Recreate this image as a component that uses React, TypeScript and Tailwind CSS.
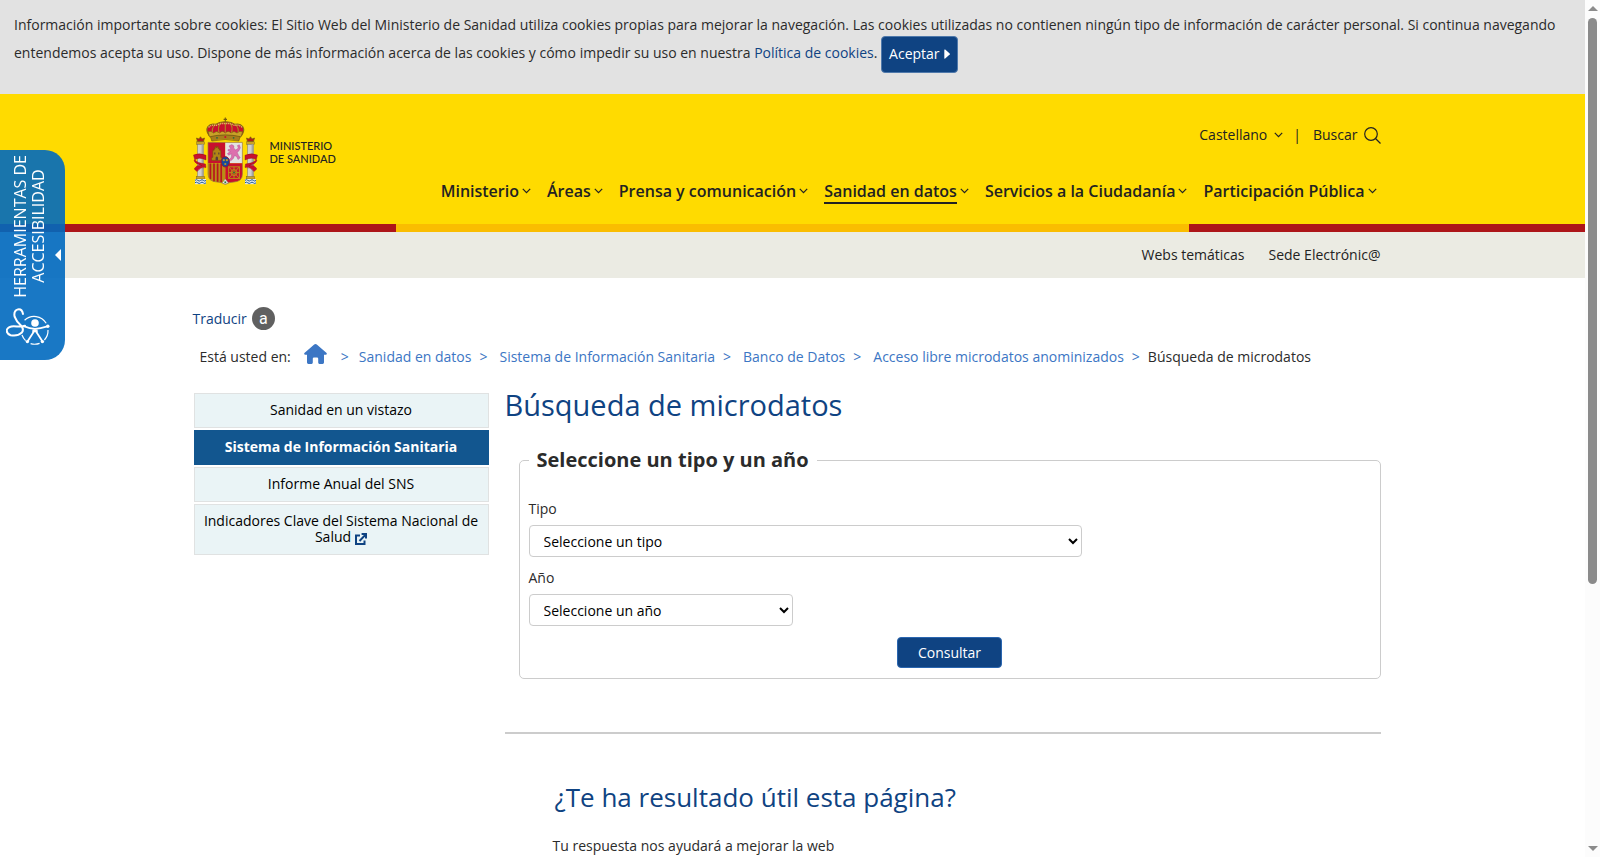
import { useState } from "react";

const navItems = [
    { label: "Ministerio", active: false },
    { label: "Áreas", active: false },
    { label: "Prensa y comunicación", active: false },
    { label: "Sanidad en datos", active: true },
    { label: "Servicios a la Ciudadanía", active: false },
    { label: "Participación Pública", active: false },
];

const breadcrumbs = [
    "Sanidad en datos",
    "Sistema de Información Sanitaria",
    "Banco de Datos",
    "Acceso libre microdatos anominizados",
];

const sideLinks = [
    { label: "Sanidad en un vistazo" },
    { label: "Sistema de Información Sanitaria", active: true },
    { label: "Informe Anual del SNS" },
    { label: "Indicadores Clave del Sistema Nacional de Salud", external: true },
];

function Chevron() {
    return (
        <svg viewBox="0 0 9 6" className="h-[6px] w-[9px]" fill="none" stroke="#222" strokeWidth="1.2" aria-hidden="true">
            <path d="M0.8 0.8 L4.5 4.6 L8.2 0.8" />
        </svg>
    );
}

function Pillar({ x }: { x: number }) {
    return (
        <g transform={`translate(${x} 0)`}>
            <path d="M1.5 24.5 L0.5 21 L3 22 L4.5 19.8 L6 22 L8.5 21 L7.5 24.5 Z" fill="#b0201c" stroke="#7a5a10" strokeWidth="0.7" />
            <rect x="0.6" y="24.8" width="7.8" height="2.6" fill="#c9a227" stroke="#6d5a1a" strokeWidth="0.4" />
            <rect x="1.5" y="27.4" width="6" height="33" fill="#cfcfcf" stroke="#77756a" strokeWidth="0.5" />
            <rect x="5.6" y="27.6" width="1.6" height="32.6" fill="#a5a5a5" />
            <rect x="0.3" y="59.4" width="8.4" height="2.6" fill="#c9a227" stroke="#6d5a1a" strokeWidth="0.4" />
            <rect x="-1" y="62" width="11" height="5.2" fill="#e6e9ea" />
            <path d="M-1 63.4 q1.4 -1.4 2.8 0 t2.8 0 t2.8 0 t2.6 0 M-1 65.8 q1.4 -1.4 2.8 0 t2.8 0 t2.8 0 t2.6 0" fill="none" stroke="#1d5a94" strokeWidth="1" />
        </g>
    );
}

function CoatOfArms() {
    return (
        <svg viewBox="0 0 65 70" className="h-[70px] w-[65px]" aria-hidden="true">
            <Pillar x={3} />
            <Pillar x={53} />
            {/* Ribbons */}
            <g fill="#c8102e" stroke="#8a1015" strokeWidth="0.4">
                <path d="M0.5 38 Q6 35.6 13 38.2 L13 43 Q6 39.6 1.8 42.8 Z" />
                <path d="M1.8 42.8 Q4 46 12.5 47 L13 50.5 Q8 49.5 4 54.5 L1.2 52 Q4 47 9 48.6 Q2 47 1 43.4 Z" />
                <path d="M64.5 38 Q59 35.6 52 38.2 L52 43 Q59 39.6 63.2 42.8 Z" />
                <path d="M63.2 42.8 Q61 46 52.5 47 L52 50.5 Q57 49.5 61 54.5 L63.8 52 Q61 47 56 48.6 Q63 47 64 43.4 Z" />
            </g>
            {/* Crown */}
            <path d="M16 18.5 Q12.6 13.5 14.8 9.8 Q17.6 6 22.5 7.4 Q27 4.6 32.3 5 Q37.6 4.6 42.2 7.4 Q47 6 49.8 9.8 Q52 13.5 48.6 18.5 Z" fill="#c8102e" stroke="#8b6b12" strokeWidth="1.2" />
            <path d="M20.2 17.8 Q17.5 11.5 22.5 7.4 M26.4 17 Q24 9.5 28 5.6 M44.4 17.8 Q47 11.5 42.2 7.4 M38.2 17 Q40.6 9.5 36.6 5.6 M32.3 5 V17" fill="none" stroke="#b08a1c" strokeWidth="1.1" />
            <path d="M15.6 10.4 Q18.6 7.2 23 8.6 Q27.4 6 32.3 6.6 Q37.2 6 41.6 8.6 Q46 7.2 49 10.4" fill="none" stroke="#e3c765" strokeWidth="1.3" strokeDasharray="1.2 0.8" />
            <path d="M15 14.8 Q18 13.4 20.6 16 Q23.6 13 26.6 16 Q29.4 12.8 32.3 16 Q35.2 12.8 38 16 Q41 13 44 16 Q46.6 13.4 49.6 14.8 L48 20 Q32 16.6 16.6 20 Z" fill="#c9a227" stroke="#77590f" strokeWidth="0.6" />
            <path d="M17.4 19.6 Q32.3 16.2 47.2 19.6 L45.8 24 Q32.3 21.2 18.8 24 Z" fill="#a87d1c" stroke="#664d0d" strokeWidth="0.6" />
            <g fill="#2b6a3f">
                <circle cx="24" cy="20.8" r="0.9" />
                <circle cx="40.6" cy="20.8" r="0.9" />
            </g>
            <circle cx="32.3" cy="20" r="1" fill="#c8102e" />
            <path d="M32.3 0.6 V5.4 M30.6 2.4 H34" stroke="#77590f" strokeWidth="1.1" />
            {/* Shield */}
            <path d="M15 25.4 H32.3 V46.2 H15 Z" fill="#c8102e" />
            <path d="M32.3 25.4 H49.4 V46.2 H32.3 Z" fill="#e3e3e3" />
            <path d="M15 46.2 H32.3 V66.8 Q29 65.2 24 65 Q15 64.5 15 57 Z" fill="#b98c17" />
            <path d="M49.4 46.2 H32.3 V66.8 Q36 65.2 41 65 Q49.4 64.5 49.4 57 Z" fill="#c8102e" />
            <path d="M17.4 46.4 V62 M21 46.4 V64.4 M24.6 46.4 V65 M28.2 46.4 V65.6" stroke="#b8161f" strokeWidth="1.7" />
            {/* Castle */}
            <path d="M18.6 43.4 V40.4 H19.8 V33.2 H21.2 V31.6 H22.2 V29.6 H23.2 V30.6 H24.2 V29.6 H25.2 V31.6 H26.4 V33.2 H27.8 V40.4 H29 V43.4 Z" fill="#b08414" stroke="#6d4d0a" strokeWidth="0.5" />
            <path d="M22.6 43.2 V40.4 Q23.8 38.8 25 40.4 V43.2 Z M21.2 35.4 H22.4 V37.4 H21.2 Z M25.2 35.4 H26.4 V37.4 H25.2 Z" fill="#5a3c3a" />
            {/* Lion */}
            <path d="M36 29 L38.8 27.6 L41 29 L40.6 31 L42.8 33 L45.4 31 L44.4 28.6 L46.4 27.8 L47.4 30.8 L45.8 34 L44.2 35.4 L45.6 38.4 L47.2 40.8 L45 42.6 L43.8 39.8 L41.6 38.4 L40.4 41.4 L37.8 43.8 L36.2 42.6 L38.4 40.2 L38.6 36.8 L35.6 38.2 L34.4 36.6 L37.4 34.6 L35 33.8 L35.2 32.4 L38 32.2 Z" fill="#dd6fae" stroke="#a84a88" strokeWidth="0.4" />
            {/* Chains */}
            <g fill="none" stroke="#b98c17" strokeWidth="1">
                <rect x="35.6" y="49.8" width="10.8" height="11.6" />
                <path d="M35.6 49.8 L46.4 61.4 M46.4 49.8 L35.6 61.4 M41 49.8 V61.4 M35.6 55.6 H46.4" />
                <circle cx="41" cy="55.6" r="3" />
            </g>
            <circle cx="41" cy="55.6" r="1" fill="#2b6a3f" />
            <path d="M29 66.2 L32.3 62 L35.6 66.2 Q32.3 68.4 29 66.2 Z" fill="#ecebe6" stroke="#8a8a80" strokeWidth="0.4" />
            <path d="M31.4 64.4 H33.2 V66.2 H31.4 Z" fill="#2b7a45" />
            <ellipse cx="32.3" cy="44.8" rx="4.2" ry="5.2" fill="#17489a" stroke="#a01522" strokeWidth="0.9" />
            <g fill="#b8952a">
                <circle cx="30.8" cy="43.2" r="1.1" />
                <circle cx="33.9" cy="43.2" r="1.1" />
                <circle cx="32.3" cy="47" r="1.1" />
            </g>
            <path d="M15 25.4 H49.4 V57 Q49.4 64.5 41 65 Q36 65.2 32.3 67.4 Q29 65.2 24 65 Q15 64.5 15 57 Z" fill="none" stroke="#9c7a3a" strokeWidth="0.7" />
        </svg>
    );
}

function AccessibilityTab() {
    return (
        <button
            type="button"
            className="fixed left-0 top-[150px] z-20 flex h-[210px] w-[65px] cursor-pointer flex-col items-start rounded-r-[20px] bg-[#006abf]/90 pt-[5px] text-white"
        >
            <span className="flex items-center gap-2">
                <span className="ml-[11px] rotate-180 text-center text-[16px] leading-[18px] [writing-mode:vertical-rl]">
                    HERRAMIENTAS DE
                    <br />
                    ACCESIBILIDAD
                </span>
                <svg viewBox="0 0 6 12" className="mt-[58px] h-3 w-[6px]" fill="currentColor" aria-hidden="true">
                    <path d="M6 0 V12 L0 6 Z" />
                </svg>
            </span>
            <svg viewBox="0 0 44 38" className="ml-[6px] mt-[10px] h-[38px] w-[44px]" fill="none" stroke="currentColor" aria-hidden="true">
                <path
                    d="M17 6 Q16 0.8 12 1.4 Q7.4 2.6 8.6 8.6 Q10.4 13.6 15.2 17.8 Q18.4 21.6 15.6 24.8 Q11.4 28.6 4.6 27.2 Q-0.2 25.4 1 21.4 Q3 17.2 11 18.4 Q15.6 19 19 17.8"
                    strokeWidth="2"
                    strokeLinecap="round"
                />
                <path d="M18.6 12.2 A14 14 0 0 1 40.2 15.2 M42 22 A14 14 0 0 1 38.4 32 M33.6 35.4 A14 14 0 0 1 24.6 35.6 M19.6 32.6 A14 14 0 0 1 16 27" strokeWidth="1.2" />
                <circle cx="29" cy="15" r="3.8" fill="currentColor" stroke="none" />
                <path d="M17.6 18.2 Q24 20.8 29 20.8 Q34 20.8 41.4 18.4 M27.4 21 L27 25 L21.8 33 M30.6 21 L31 25 L36.2 33 M27 25 L29 22 L31 25" strokeWidth="1.8" />
                <circle cx="41.8" cy="18.2" r="1.7" fill="currentColor" stroke="none" />
                <circle cx="21.4" cy="33.6" r="1.7" fill="currentColor" stroke="none" />
                <circle cx="36.4" cy="33.6" r="1.7" fill="currentColor" stroke="none" />
            </svg>
        </button>
    );
}

function CookieBar() {
    return (
        <div className="bg-[#e2e2e2] px-[14px] pb-[27px] pt-[11px] leading-[28px]">
            Información importante sobre cookies: El Sitio Web del Ministerio de Sanidad utiliza cookies propias para
            mejorar la navegación. Las cookies utilizadas no contienen ningún tipo de información de carácter personal.
            Si continua navegando entendemos acepta su uso. Dispone de más información acerca de las cookies y cómo
            impedir su uso en nuestra{" "}
            <a href="#cookies" className="text-[#0f4382]">
                Política de cookies
            </a>
            .{" "}
            <button
                type="button"
                className="-my-2 inline-flex h-[37px] cursor-pointer items-center gap-1 rounded-[4px] border border-[#4f79ab] bg-[#0f4382] px-[7px] align-middle text-white"
            >
                Aceptar
                <svg viewBox="0 0 6 10" className="h-[10px] w-[6px]" fill="currentColor" aria-hidden="true">
                    <path d="M0.3 1 Q0.3 0 1.2 0.6 L5.7 4.5 Q6 5 5.7 5.5 L1.2 9.4 Q0.3 10 0.3 9 Z" />
                </svg>
            </button>
        </div>
    );
}

function Header() {
    return (
        <header>
            <div className="bg-[#ffdb00]">
                <div className="mx-auto flex h-[130px] max-w-[1200px] justify-between pr-3">
                    <a href="#inicio" className="flex items-start gap-3 pt-[23px]">
                        <CoatOfArms />
                        <span className="pt-[22px] font-['Lato',sans-serif] text-[11px] font-medium leading-[13px] text-[#222]">
                            MINISTERIO
                            <br />
                            DE SANIDAD
                        </span>
                    </a>
                    <div className="flex flex-col items-end text-[#222]">
                        <div className="flex items-center pt-[31px] leading-[20px]">
                            <button type="button" className="flex cursor-pointer items-center gap-[7px]">
                                Castellano
                                <Chevron />
                            </button>
                            <span className="ml-[10px] mr-3">|</span>
                            <button type="button" className="flex cursor-pointer items-center gap-[6px]">
                                Buscar
                                <svg viewBox="0 0 17 17" className="size-[17px]" fill="none" stroke="#222" strokeWidth="1.2" aria-hidden="true">
                                    <circle cx="7" cy="7" r="6.3" />
                                    <path d="M11.5 11.5 L16.5 16.5" />
                                </svg>
                            </button>
                        </div>
                        <nav className="flex gap-4 pr-1 pt-[33px] text-[16px] font-semibold leading-[24px]">
                            {navItems.map((item) => (
                                <a key={item.label} href="#menu" className="flex items-center gap-[3px]">
                                    <span className={item.active ? "border-y-2 border-b-[#222] border-t-transparent leading-[22px]" : ""}>
                                        {item.label}
                                    </span>
                                    <Chevron />
                                </a>
                            ))}
                        </nav>
                    </div>
                </div>
            </div>
            <div className="flex h-2">
                <div className="w-1/4 bg-[#ad1519]" />
                <div className="w-1/2 bg-[#fabd00]" />
                <div className="w-1/4 bg-[#ad1519]" />
            </div>
            <div className="bg-[#ebebe3]">
                <div className="mx-auto flex h-[46px] max-w-[1200px] items-center justify-end gap-6 pr-3 text-[#222]">
                    <a href="#webs">Webs temáticas</a>
                    <a href="#sede">Sede Electrónic@</a>
                </div>
            </div>
        </header>
    );
}

function Breadcrumb() {
    return (
        <nav aria-label="Ruta" className="flex items-center pl-[7px] pt-[14px] text-[#3c76c4]">
            <span className="text-[#2b2b2b]">Está usted en:</span>
            <a href="#inicio" aria-label="Inicio" className="mb-[5px] ml-[13px] mr-[14px]">
                <svg viewBox="0 0 23 20" className="h-5 w-[23px]" fill="currentColor" aria-hidden="true">
                    <path d="M11.5 0 Q12.2 0 12.8 0.6 L22.6 9 Q23.4 10.6 21.6 10.8 H20 V18.6 Q20 20 18.6 20 H15.4 Q14.2 20 14.2 18.6 V14.6 Q14.2 13.4 13 13.4 H10 Q8.8 13.4 8.8 14.6 V18.6 Q8.8 20 7.6 20 H4.4 Q3 20 3 18.6 V10.8 H1.4 Q-0.4 10.6 0.4 9 L10.2 0.6 Q10.8 0 11.5 0 Z" />
                </svg>
            </a>
            <span className="mr-[10px]">&gt;</span>
            {breadcrumbs.map((crumb, i) => (
                <span key={crumb} className="flex">
                    <a href="#ruta">{crumb}</a>
                    <span className={i === breadcrumbs.length - 1 ? "mx-2" : "ml-2 mr-3"}>&gt;</span>
                </span>
            ))}
            <span className="text-[#2b2b2b]">Búsqueda de microdatos</span>
        </nav>
    );
}

function SideMenu() {
    return (
        <ul className="flex w-[295px] shrink-0 flex-col gap-[2px] pt-[2px] text-center leading-[16px] text-black">
            {sideLinks.map((link) => (
                <li key={link.label}>
                    <a
                        href="#seccion"
                        className={
                            link.active
                                ? "block border border-[#12568f] bg-[#12568f] px-2 pb-[9px] pt-2 font-bold text-white"
                                : "block border border-[#e0e2e2] bg-[#eaf4f6] px-2 pb-[9px] pt-2"
                        }
                    >
                        {link.label}
                        {link.external && (
                            <svg viewBox="0 0 12 12" className="ml-1 inline size-3 align-[-3px]" fill="none" stroke="#0f4382" strokeWidth="2" aria-label="Enlace externo">
                                <path d="M5 2.5 H1 V11 H9.5 V7.5 M4.5 8 L10.6 1.6 M6.6 1 H11 V5.4" />
                            </svg>
                        )}
                    </a>
                </li>
            ))}
        </ul>
    );
}

function SearchForm() {
    const [type, setType] = useState("");
    const [year, setYear] = useState("");

    return (
        <form onSubmit={(e) => e.preventDefault()} className="ml-[14px] mt-[27px]">
            <fieldset className="rounded-[5px] border border-[#ccc] px-[9px] pb-[10px]">
                <legend className="px-2 text-[20px] font-bold leading-[28px]">Seleccione un tipo y un año</legend>
                <label htmlFor="tipo" className="mt-[25px] block leading-[20px]">
                    Tipo
                </label>
                <select
                    id="tipo"
                    value={type}
                    onChange={(e) => setType(e.target.value)}
                    className="mt-[6px] block h-[32px] w-[553px] rounded-[4px] border border-[#ccc] bg-white pl-[10px] text-black"
                >
                    <option value="">Seleccione un tipo</option>
                </select>
                <label htmlFor="anio" className="mt-[11px] block leading-[20px]">
                    Año
                </label>
                <select
                    id="anio"
                    value={year}
                    onChange={(e) => setYear(e.target.value)}
                    className="mt-[6px] block h-[32px] w-[264px] rounded-[4px] border border-[#ccc] bg-white pl-[10px] text-black"
                >
                    <option value="">Seleccione un año</option>
                </select>
                <button
                    type="submit"
                    className="mx-auto mt-[11px] block h-[31px] cursor-pointer rounded-[4px] border border-[#2a66b0] bg-[#0f4382] px-5 text-white"
                >
                    Consultar
                </button>
            </fieldset>
        </form>
    );
}

export default function App() {
    return (
        <div className="flex h-screen bg-white font-['Open_Sans',sans-serif] text-[14px] leading-[20px] text-[#2b2b2b]">
            <div className="min-w-0 flex-1 overflow-y-auto [scrollbar-width:none]">
                <CookieBar />
                <Header />
                <AccessibilityTab />
                <main className="mx-auto max-w-[1200px] pr-3 pt-[29px]">
                    <a href="#traducir" className="flex items-center gap-[5px] text-[#0f4382]">
                        Traducir
                        <span className="flex size-[23px] items-center justify-center rounded-full bg-[#606060] font-['Roboto',sans-serif] text-[16px] text-white">
                            a
                        </span>
                    </a>
                    <Breadcrumb />
                    <div className="flex gap-4 pl-[1px] pt-[22px]">
                        <SideMenu />
                        <div className="min-w-0 flex-1">
                            <h1 className="text-[29px] leading-[28px] text-[#0f4382]">Búsqueda de microdatos</h1>
                            <SearchForm />
                            <hr className="mt-[53px] border-t-2 border-[#ccc]" />
                            <section className="px-12 pt-[45px]">
                                <h2 className="pl-[2px] text-[26px] leading-[36px] text-[#0f4382]">¿Te ha resultado útil esta página?</h2>
                                <p className="pb-6 pt-[21px]">Tu respuesta nos ayudará a mejorar la web</p>
                            </section>
                        </div>
                    </div>
                </main>
            </div>
            {/* Scroll track */}
            <div className="flex w-[15px] flex-col items-center bg-[#fcfcfc] py-[6px]" aria-hidden="true">
                <div className="border-x-[5px] border-b-[5px] border-x-transparent border-b-[#8b8b8b]" />
                <div className="mb-auto mt-[7px] h-[67%] w-[9px] rounded-full bg-[#8b8b8b]" />
                <div className="border-x-[5px] border-t-[5px] border-x-transparent border-t-[#8b8b8b]" />
            </div>
        </div>
    );
}
